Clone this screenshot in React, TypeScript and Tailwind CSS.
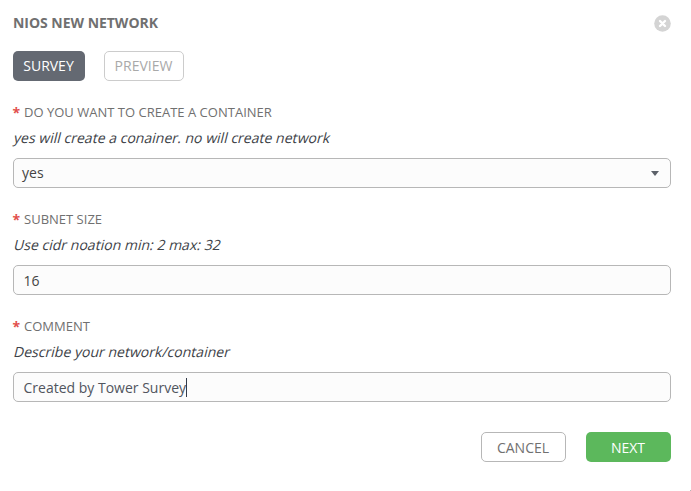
import React from "react";

function Field({ label, hint, children }: { label: string; hint: string; children: React.ReactNode }) {
  return (
    <div className="h-[107px]">
      <div className="flex h-[18px] items-center text-[13px] text-[#707070]">
        <span className="-ml-[0.5px] -mt-[2px] w-[11.5px] text-[14px] font-bold text-[#e2504c]">*</span>
        <span className="tracking-[0.01px]">{label}</span>
      </div>
      <div className="mt-[6px] h-5 w-fit origin-[0_15px] skew-x-[-14deg] text-[14px] leading-5 tracking-[0.025px] text-[#3d4247]">{hint}</div>
      <div className="mt-[10px]">{children}</div>
    </div>
  );
}

const box = "flex h-[30px] items-center rounded-[5px] border border-[#b7b7b7] bg-[#fcfcfc] text-[14px]";

export default function App() {
  return (
    <main className="relative h-[491px] w-[691px] overflow-hidden bg-white pl-[13px] pr-5 pt-[13px] font-['Open_Sans',sans-serif]">
      <header className="flex h-5 items-center justify-between">
        <h1 className="-mt-px text-[14px] font-bold tracking-[-0.03px] text-[#707070]">NIOS NEW NETWORK</h1>
        <svg className="size-[17px]" viewBox="0 0 17 17">
          <circle cx="8.5" cy="8.5" r="8.3" fill="#d4d4d4" />
          <path d="M6 6l5 5M11 6l-5 5" stroke="#fff" strokeWidth="2.4" strokeLinecap="round" />
        </svg>
      </header>
      <nav className="mt-[18px] flex gap-[19px] text-[14px]">
        <button className="h-[30px] w-[72px] rounded-[5px] bg-[#646972] pb-[2px] pr-px text-white">SURVEY</button>
        <button className="h-[30px] w-[80px] rounded-[5px] border border-[#cccccc] pb-[2px] pr-px text-[#a9a9a9]">PREVIEW</button>
      </nav>
      <section className="mt-[23px]">
        <Field label="DO YOU WANT TO CREATE A CONTAINER" hint="yes will create a conainer. no will create network">
          <div className={`${box} justify-between pl-2 pr-[11px] text-[#444444]`}>
            <span className="-mt-[2px]">yes</span>
            <svg className="h-[5px] w-2" viewBox="0 0 8 5"><path d="M0 0h8L4 5z" fill="#5c6169" /></svg>
          </div>
        </Field>
        <Field label="SUBNET SIZE" hint="Use cidr noation min: 2 max: 32">
          <div className={`${box} pl-[9.5px] text-[#444444]`}>16</div>
        </Field>
        <Field label="COMMENT" hint="Describe your network/container">
          <div className={`${box} pl-[9.5px] text-[#50555e]`}>Created by Tower Survey<span className="h-[19px] w-px bg-[#333b4a]" /></div>
        </Field>
      </section>
      <footer className="mt-[7px] flex justify-end gap-5 text-[14px]">
        <button className="h-[30px] w-[85px] rounded-[5px] border border-[#b7b7b7] pr-px text-[#707070]">CANCEL</button>
        <button className="h-[30px] w-[85px] rounded-[5px] bg-[#5cb85c] pr-px text-white">NEXT</button>
      </footer>
      <span className="absolute bottom-0 right-0 size-px bg-[#b7b7b7]" />
    </main>
  );
}
